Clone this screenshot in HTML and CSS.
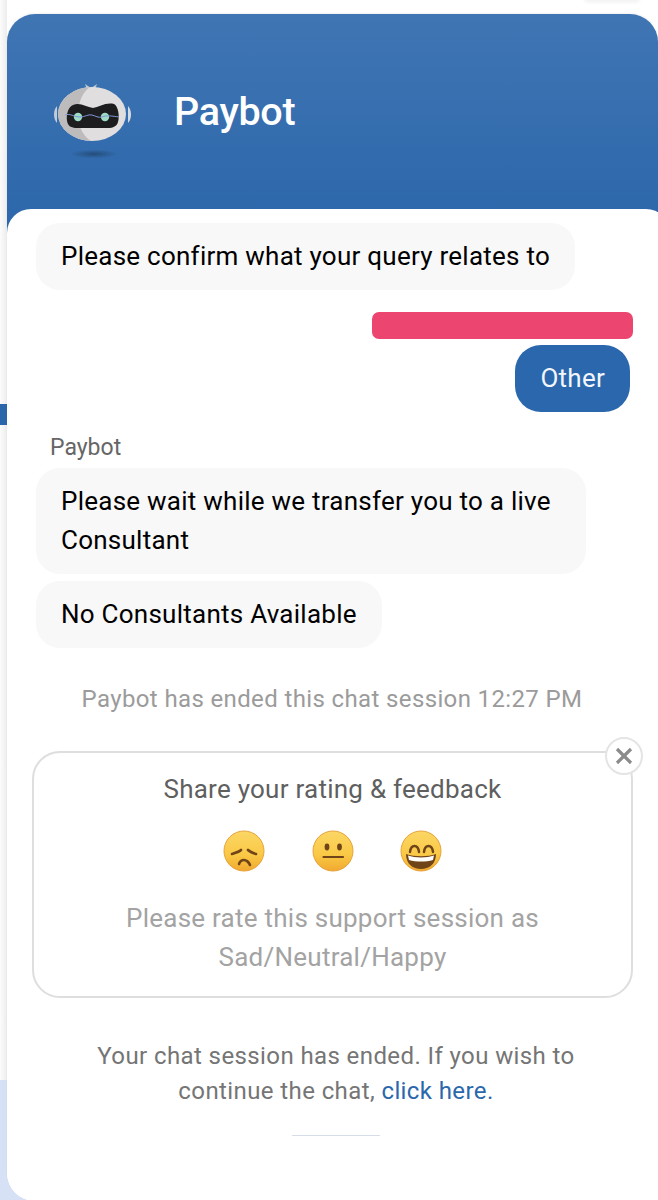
FILE: index.html
```html
<!DOCTYPE html>
<html lang="en">
<head>
  <meta charset="UTF-8">
  <meta name="viewport" content="width=device-width, initial-scale=1.0">
  <title>Paybot</title>
  <link rel="stylesheet" href="styles.css">
</head>
<body>
  <div class="page">
    <div class="top-smudge"></div>

    <!-- strip of the page behind the chat widget -->
    <div class="backdrop">
      <div class="backdrop-top"></div>
      <div class="backdrop-tick"></div>
    </div>

    <div class="widget">
      <div class="header">
        <svg class="bot-logo" width="86" height="86" viewBox="0 0 86 86">
          <defs>
            <radialGradient id="shadowGrad">
              <stop offset="0" stop-color="#1f3f66" stop-opacity="0.7"/>
              <stop offset="1" stop-color="#1f3f66" stop-opacity="0"/>
            </radialGradient>
            <clipPath id="headClip"><ellipse cx="42" cy="40" rx="34" ry="27"/></clipPath>
          </defs>
          <path d="M35 10 L41 14 L47 10 L45 16 L37 16 Z" fill="#b9c6d6"/>
          <path d="M7 32 C3 36 3 45 7 49 L7 32 Z" fill="#c3ccd6"/>
          <path d="M78 32 C82 36 82 45 78 49 L78 32 Z" fill="#d5dbe2"/>
          <ellipse cx="42" cy="40" rx="34" ry="27" fill="#e0dede"/>
          <path d="M8 40 C8 25 24 13 40 13 C26 22 22 55 41 67 C24 67 8 55 8 40 Z" fill="#bdbbbb" clip-path="url(#headClip)"/>
          <path d="M23 31 C30 28 36 33 43 34 C49 33 56 28 64 30 C68 32 70 42 68 48 C67 52 63 54 58 54 L27 54 C21 54 18 52 17 47 C16 41 18 33 23 31 Z" fill="#1d1d1f"/>
          <circle cx="28" cy="43" r="4.2" fill="#9edcc4"/>
          <circle cx="55" cy="43" r="4.2" fill="#9edcc4"/>
          <path d="M15 41 C20 39 24 43 30 43 C35 43 38 40 42 41 C46 42 48 44 52 43 C57 41 62 42 69 43" fill="none" stroke="#7f95d8" stroke-width="1"/>
          <ellipse cx="44" cy="80" rx="24" ry="4.5" fill="url(#shadowGrad)"/>
        </svg>
        <h1 class="bot-name">Paybot</h1>
      </div>

      <div class="chat">
        <div class="bubble bubble-first">Please confirm what your query relates to</div>

        <div class="user-block">
          <div class="user-redacted"></div>
          <div class="bubble-user">Other</div>
        </div>

        <div class="sender">Paybot</div>
        <div class="bubble bubble-wide">Please wait while we transfer you to a live Consultant</div>
        <div class="bubble bubble-last">No Consultants Available</div>

        <p class="status">Paybot has ended this chat session 12:27 PM</p>

        <div class="rating-card">
          <button class="close-btn" type="button" aria-label="Close">
            <svg width="18" height="18" viewBox="0 0 18 18">
              <path d="M2 2 L16 16 M16 2 L2 16" stroke="#8b8b8b" stroke-width="3.2" fill="none"/>
            </svg>
          </button>
          <div class="rating-title">Share your rating &amp; feedback</div>
          <div class="emoji-row">
            <svg width="44" height="44" viewBox="0 0 44 44">
              <defs>
                <linearGradient id="faceGrad" x1="0" y1="0" x2="0" y2="1">
                  <stop offset="0" stop-color="#fbd765"/>
                  <stop offset="0.6" stop-color="#fac845"/>
                  <stop offset="1" stop-color="#f0a92f"/>
                </linearGradient>
              </defs>
              <circle cx="22" cy="22" r="20" fill="url(#faceGrad)" stroke="#e8a33c" stroke-width="1"/>
              <path d="M10 25 C13 24 17 23 19 21 M34 25 C31 24 28 23 26 21" stroke="#6e4418" stroke-width="2.6" fill="none" stroke-linecap="round"/>
              <path d="M17 35 C18 32 20 31 22 31 C24 31 27 33 28 36" stroke="#6e4418" stroke-width="2.6" fill="none" stroke-linecap="round"/>
            </svg>
            <svg width="44" height="44" viewBox="0 0 44 44">
              <circle cx="22" cy="22" r="20" fill="url(#faceGrad)" stroke="#e8a33c" stroke-width="1"/>
              <ellipse cx="16" cy="18" rx="2.4" ry="3.4" fill="#6e4418"/>
              <ellipse cx="28.5" cy="18" rx="2.4" ry="3.4" fill="#6e4418"/>
              <path d="M12.5 28 L32 28" stroke="#6e4418" stroke-width="2.2" stroke-linecap="round"/>
            </svg>
            <svg width="44" height="44" viewBox="0 0 44 44">
              <circle cx="22" cy="22" r="20" fill="url(#faceGrad)" stroke="#e8a33c" stroke-width="1"/>
              <path d="M11 23 C12 15 19 15 20 23 M25 23 C26 15 33 15 34 23" stroke="#6e4418" stroke-width="2.4" fill="none" stroke-linecap="round"/>
              <path d="M7 25 C15 28 29 28 37 25 C37 35 30 40 22 40 C14 40 7 35 7 25 Z" fill="#6e4418"/>
              <path d="M9 26.5 C16 29 28 29 35 26.5 L34 31 C27 33 17 33 10 31 Z" fill="#fff"/>
            </svg>
          </div>
          <div class="rating-hint">Please rate this support session as<br>Sad/Neutral/Happy</div>
        </div>

        <p class="ended">Your chat session has ended. If you wish to<br>continue the chat, <a href="#">click here.</a></p>
        <div class="divider"></div>
      </div>
    </div>
  </div>
</body>
</html>
```

FILE: styles.css
```css
* {
  box-sizing: border-box;
}

html, body {
  margin: 0;
  padding: 0;
  height: 1200px;
  overflow: hidden;
}

body {
  font-family: Roboto, "Liberation Sans", sans-serif;
  background-color: #ffffff;
}

.page {
  position: relative;
  display: flex;
  height: 1200px;
  padding-top: 14px;
  background: linear-gradient(180deg, #ffffff 1080px, #d6e1f5 1080px);
}

.top-smudge {
  position: absolute;
  top: -6px;
  left: 584px;
  width: 56px;
  height: 9px;
  border-radius: 5px;
  background-color: #f4f4f4;
  filter: blur(1.5px);
}

.backdrop {
  width: 7px;
  height: 1080px;
  margin-top: -14px;
  flex-shrink: 0;
  background: linear-gradient(90deg, #fcfcfc, #ececec);
}

.backdrop-top {
  height: 404px;
}

.backdrop-tick {
  height: 21px;
  background: #2b66aa;
}

.widget {
  width: 651px;
  height: 1187px;
  background-color: #ffffff;
  border-radius: 28px 28px 0 28px;
  overflow: hidden;
  box-shadow: 0 -1px 2px rgba(0, 0, 0, 0.06);
}

.header {
  height: 220px;
  padding: 0 0 25px 43px;
  display: flex;
  align-items: center;
  gap: 38px;
  background: linear-gradient(180deg, #4075b3 0%, #2b67ab 100%);
}

.bot-logo {
  margin-top: 10px;
  flex-shrink: 0;
}

.bot-name {
  margin: 0;
  color: #ffffff;
  font-size: 39.5px;
  font-weight: 500;
  letter-spacing: -0.3px;
}

.chat {
  width: 663px;
  margin-top: -25px;
  height: 1000px;
  background-color: #ffffff;
  border-radius: 24px 24px 0 0;
  padding: 14px 37px 0 29px;
}

.bubble {
  width: fit-content;
  background-color: #f8f8f8;
  color: #000000;
  font-size: 26px;
  letter-spacing: 0.25px;
  line-height: 39px;
  padding: 14px 25px;
  border-radius: 24px;
}

.bubble-first {
  height: 67px;
}

.user-block {
  display: flex;
  flex-direction: column;
  align-items: flex-end;
  margin-top: 22px;
}

.user-redacted {
  width: 261px;
  height: 27px;
  background-color: #ec4570;
  border-radius: 7px;
}

.bubble-user {
  margin-top: 6px;
  margin-right: 3px;
  height: 67px;
  padding: 14px 25px;
  background-color: #2b67ac;
  color: #f2f6fb;
  font-size: 26px;
  letter-spacing: 0.25px;
  line-height: 39px;
  border-radius: 26px;
}

.sender {
  margin: 22px 0 0 14px;
  font-size: 23px;
  line-height: 28px;
  color: #666666;
}

.bubble-wide {
  width: 550px;
  margin-top: 6px;
  height: 106px;
}

.bubble-last {
  margin-top: 7px;
  height: 67px;
}

.status {
  margin: 33px 5px 0 0;
  text-align: center;
  font-size: 24px;
  letter-spacing: 0.37px;
  line-height: 36px;
  color: #9b9b9b;
}

.rating-card {
  position: relative;
  width: 601px;
  height: 247px;
  margin: 34px 0 0 -4px;
  border: 2px solid #dedede;
  border-radius: 28px;
  text-align: center;
  padding-top: 17px;
}

.close-btn {
  position: absolute;
  top: -16px;
  right: -12px;
  width: 38px;
  height: 38px;
  padding: 0;
  border: 2px solid #e4e4e4;
  border-radius: 50%;
  background-color: #ffffff;
  display: flex;
  align-items: center;
  justify-content: center;
}

.rating-title {
  font-size: 26px;
  letter-spacing: 0.25px;
  line-height: 38px;
  color: #5f5f5f;
}

.emoji-row {
  display: flex;
  justify-content: center;
  gap: 44.5px;
  margin-top: 21px;
}

.rating-hint {
  margin-top: 26px;
  font-size: 26px;
  letter-spacing: 0.25px;
  line-height: 39px;
  color: #a3a3a3;
}

.ended {
  margin: 41px 0 0 3px;
  text-align: center;
  font-size: 24px;
  letter-spacing: 0.4px;
  line-height: 35px;
  color: #757575;
}

.ended a {
  color: #2b67ac;
  text-decoration: none;
}

.divider {
  width: 88px;
  height: 1px;
  margin: 26px 0 0 256px;
  background-color: #d4dde8;
}
```
